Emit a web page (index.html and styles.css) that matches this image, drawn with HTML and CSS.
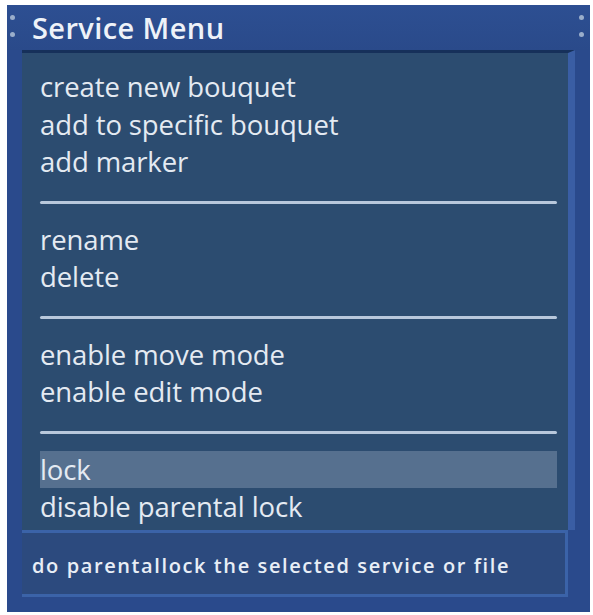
FILE: index.html
```html
<!DOCTYPE html>
<html>
<head>
<meta charset="utf-8">
<link rel="stylesheet" href="styles.css">
</head>
<body>
<div class="window">
  <div class="titlebar">
    <span class="dots dots-left"><i></i><i></i></span>
    <span class="title">Service Menu</span>
    <span class="dots dots-right"><i></i><i></i></span>
  </div>
  <div class="body">
    <div class="panel">
      <ul class="group">
        <li>create new bouquet</li>
        <li>add to specific bouquet</li>
        <li>add marker</li>
      </ul>
      <hr class="sep">
      <ul class="group">
        <li>rename</li>
        <li>delete</li>
      </ul>
      <hr class="sep">
      <ul class="group">
        <li>enable move mode</li>
        <li>enable edit mode</li>
      </ul>
      <hr class="sep">
      <ul class="group">
        <li class="selected">lock</li>
        <li>disable parental lock</li>
      </ul>
    </div>
    <div class="status">do parentallock the selected service or file</div>
  </div>
</div>
</body>
</html>
```
FILE: styles.css
```css
html, body {
  margin: 0;
  padding: 0;
  background: #ffffff;
}
body {
  width: 593px;
  height: 615px;
  overflow: hidden;
}
.window {
  box-sizing: border-box;
  margin: 5px 3px 0 7px;
  width: 583px;
  height: 607px;
  background: #2a4a8c;
  display: flex;
  flex-direction: column;
  font-family: "Open Sans", "DejaVu Sans", sans-serif;
  color: #e6ecf4;
}
.titlebar {
  height: 45px;
  display: flex;
  align-items: center;
  background: linear-gradient(#2d4f92, #2a4a8a);
  position: relative;
}
.title {
  font-size: 29px;
  font-weight: 600;
  margin-left: 25px;
  color: #eef2f8;
  letter-spacing: 0.4px;
}
.dots {
  position: absolute;
  top: 10px;
  display: flex;
  flex-direction: column;
  gap: 12px;
}
.dots i {
  display: block;
  width: 5px;
  height: 5px;
  border-radius: 50%;
  background: #9aaecb;
}
.dots-left { left: 3px; }
.dots-right { right: 6px; }
.body {
  flex: 1;
  margin: 0 15px 15px 15px;
  display: flex;
  flex-direction: column;
}
.panel {
  flex: 1;
  background: #2c4c70;
  border-top: 3px solid #16305a;
  border-right: 7px solid #3a5ea4;
  padding: 15px 11px 0 18px;
  display: flex;
  flex-direction: column;
}
.group {
  list-style: none;
  margin: 0;
  padding: 0;
}
.group li {
  font-size: 27.5px;
  height: 37.5px;
  line-height: 37.5px;
  padding-left: 0;
  color: #e4eaf2;
  letter-spacing: -0.1px;
}
.group li.selected {
  background: #56708f;
}
.sep {
  border: 0;
  height: 3px;
  margin: 20px 0 17px 0;
  background: #b8c8dc;
  border-radius: 2px;
}
.status {
  height: 67px;
  box-sizing: border-box;
  margin-right: 7px;
  background: #2c4a7e;
  border-top: 3px solid #3b63a8;
  border-bottom: 3px solid #3b63a8;
  border-right: 3px solid #3b63a8;
  padding: 3px 0 0 10px;
  display: flex;
  align-items: center;
  font-size: 20px;
  font-weight: 600;
  letter-spacing: 1.6px;
  color: #e8eef6;
}
```
